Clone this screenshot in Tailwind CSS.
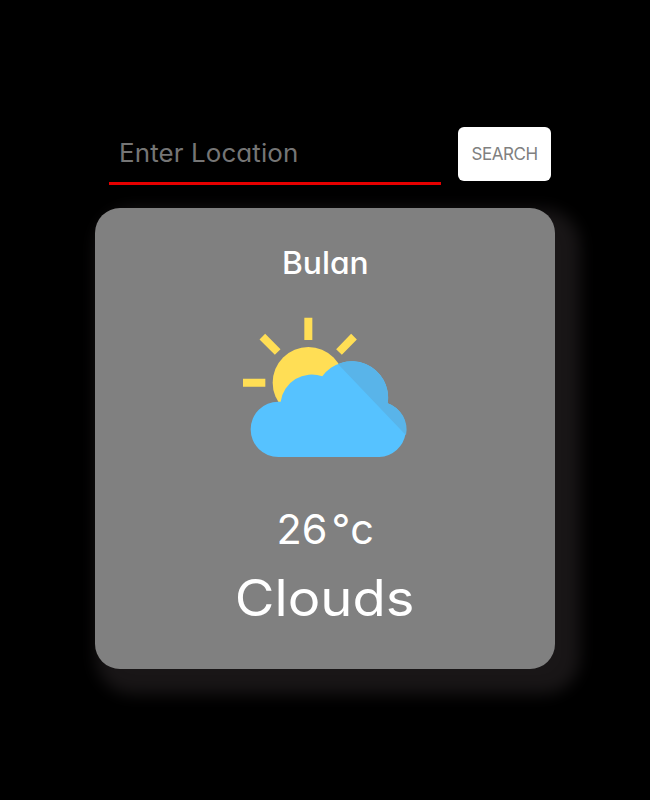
<!DOCTYPE html>
<html lang="en">
<head>
<meta charset="utf-8">
<title>Weather</title>
<script src="https://cdn.jsdelivr.net/npm/@tailwindcss/browser@4"></script>
</head>
<body class="bg-black min-h-screen font-[Inter,sans-serif] [font-feature-settings:'cv11'] overflow-hidden">
<main class="w-[460px] ml-[95px] pt-[127px]">
  <form class="flex h-[81px] pl-[14px] items-start">
    <div class="w-[332px] h-[58px] border-b-[3px] border-[#e60000] pl-[10px]">
      <span class="block whitespace-nowrap text-[25px] leading-[53px] tracking-[0.1px] origin-left scale-x-[1.038] text-[#757575]">Enter Location</span>
    </div>
    <button type="button" class="ml-[17px] w-[93px] h-[54px] rounded-[6px] bg-white text-[17px] leading-[54px] tracking-[-0.45px] text-[#808080] whitespace-nowrap">SEARCH</button>
  </form>
  <section class="h-[460.5px] rounded-[25px] bg-[#808080] text-white flex flex-col items-center pt-[35px] shadow-[13px_13px_16px_12px_#191617]">
    <h1 class="text-[31px] leading-[40px] font-medium whitespace-nowrap scale-x-[1.025]">Bulan</h1>
    <svg class="mt-[27px] w-[180px] h-[155px]" viewBox="0 0 540 465" fill="none">
      <path d="M220 23V90M24 218H91M82 80L128 126M357 80L312 126" stroke="#ffde55" stroke-width="24"/>
      <circle cx="220" cy="218" r="107" fill="#ffde55"/>
      <path d="M130 441A83 83 0 0 1 130 275H137A94 94 0 0 1 262 199A109 109 0 0 1 458 280A83 83 0 0 1 433 441Z" fill="#56c2ff"/>
      <path d="M309 162A109 109 0 0 1 458 280A83 83 0 0 1 513 376Z" fill="#59b4e9"/>
    </svg>
    <p class="mt-[38px] text-[41px] leading-[52px] whitespace-nowrap scale-x-[1.01]">26<span class="ml-[4px]">°c</span></p>
    <p class="mt-[8px] text-[50px] leading-[70px] whitespace-nowrap scale-x-[1.088]">Clouds</p>
  </section>
</main>
</body>
</html>
